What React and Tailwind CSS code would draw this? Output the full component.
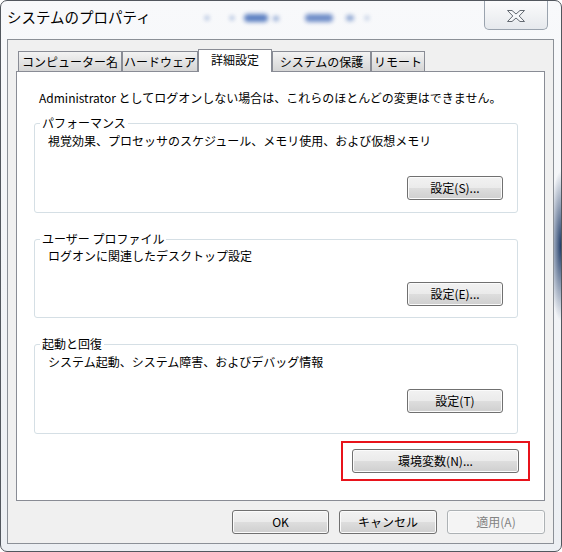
const tabs = [
  { label: "コンピューター名", width: "w-[104px]" },
  { label: "ハードウェア", width: "w-[76px]" },
  { label: "詳細設定", width: "w-[74px]", active: true },
  { label: "システムの保護", width: "w-[99px]" },
  { label: "リモート", width: "w-[54px]" },
];

function WinButton({ children, width, disabled = false }) {
  const look = disabled
    ? "border-[#adb2b5] bg-[#f4f4f4] text-[#838383]"
    : "border-[#707070] bg-[linear-gradient(to_bottom,#f2f2f2_0%,#ebebeb_48%,#dddddd_52%,#cfcfcf_100%)] text-black";
  return (
    <button
      type="button"
      className={`flex h-[24px] items-center justify-center rounded-[3px] border text-[12px] leading-none shadow-[inset_0_0_0_1px_#fbfbfb] ${look} ${width}`}
    >
      {children}
    </button>
  );
}

function GroupBox({ label, text, button, textPad, buttonGap, bottomPad }) {
  return (
    <div className={`relative ml-[17px] w-[484px] rounded-[3px] border border-[#d5dfe5] ${textPad} ${bottomPad}`}>
      {/* label sits on the top border line */}
      <span className="absolute -top-[9px] left-[5px] bg-white px-[2px] leading-[16px]">
        {label}
      </span>
      <p className="pl-[13px] leading-[16px]">{text}</p>
      <div className={`flex justify-end pr-[14px] ${buttonGap}`}>
        <WinButton width="w-[96px]">{button}</WinButton>
      </div>
    </div>
  );
}

function CloseIcon() {
  return (
    <svg width="20" height="14" viewBox="0 0 20 14">
      <polygon
        points="1.5,1.5 6,1.5 10,5 14,1.5 18.5,1.5 13.2,7 18.5,12.5 14,12.5 10,9 6,12.5 1.5,12.5 6.8,7"
        fill="#f6f7f9"
        stroke="#646a72"
        strokeWidth="1"
        strokeLinejoin="round"
      />
    </svg>
  );
}

function App() {
  return (
    <div className="h-[552px] w-[562px] bg-white font-['Noto_Sans_CJK_JP',sans-serif] text-[12px] text-black">
      <div className="flex h-full w-full flex-col rounded-[7px] border border-[#52575e] bg-[radial-gradient(12px_75px_at_100%_245px,#1f3b68,transparent),linear-gradient(to_bottom,#f8f9fb,#eceff3)]">

        {/* Title bar */}
        <div className="flex h-[38px] items-start">
          <div className="pl-[6px] pt-[6px] text-[14.5px] leading-[20px]">
            システムのプロパティ
          </div>
          <div className="ml-[54px] mt-[13px] flex items-center blur-[2px]">
            <span className="h-[4px] w-[4px] rounded-full bg-[#8aa3d0]" />
            <span className="ml-[21px] h-[4px] w-[4px] rounded-full bg-[#8aa3d0]" />
            <span className="ml-[10px] h-[8px] w-[24px] rounded-full bg-[#5d80c2]" />
            <span className="ml-[5px] h-[5px] w-[6px] rounded-full bg-[#90a8d4]" />
            <span className="ml-[26px] h-[8px] w-[28px] rounded-full bg-[#6f8dc8]" />
            <span className="ml-[13px] h-[6px] w-[8px] rounded-full bg-[#8ea6d2]" />
            <span className="ml-[11px] h-[4px] w-[4px] rounded-full bg-[#a3b7da]" />
          </div>
          <div className="ml-auto mr-[13px] flex h-[29px] w-[64px] items-center justify-center rounded-b-[5px] border-x border-b border-[#9aa3ae] bg-[linear-gradient(to_bottom,#fbfbfc,#e6e9ed)] pt-[2px]">
            <CloseIcon />
          </div>
        </div>

        {/* Client area */}
        <div className="ml-[6px] mr-[7px] flex h-[505px] flex-col border border-[#8b9097] bg-[#f0f0f0] px-[8px] pt-[9px]">

          {/* Tabs */}
          <div className="flex h-[22px] items-end pl-[2px]">
            {tabs.map((tab) =>
              tab.active ? (
                <div
                  key={tab.label}
                  className={`relative z-10 -mb-px flex h-[23px] items-center justify-center border-x border-t border-[#898c95] bg-white pb-[2px] ${tab.width}`}
                >
                  {tab.label}
                </div>
              ) : (
                <div
                  key={tab.label}
                  className={`flex h-[20px] items-center justify-center border-x border-t border-[#898c95] bg-[linear-gradient(to_bottom,#f3f3f3,#e4e4e4_50%,#d6d6d6)] ${tab.width}`}
                >
                  {tab.label}
                </div>
              )
            )}
          </div>

          {/* Tab page */}
          <div className="flex h-[430px] flex-col border border-[#898c95] bg-white">
            <p className="mt-[18px] pl-[22px] leading-[16px]">
              Administrator としてログオンしない場合は、これらのほとんどの変更はできません。
            </p>

            <div className="mt-[17px]">
              <GroupBox
                label="パフォーマンス"
                text="視覚効果、プロセッサのスケジュール、メモリ使用、および仮想メモリ"
                button="設定(S)..."
                textPad="pt-[9px]"
                buttonGap="mt-[27px]"
                bottomPad="pb-[12px]"
              />
            </div>

            <div className="mt-[26px]">
              <GroupBox
                label="ユーザー プロファイル"
                text="ログオンに関連したデスクトップ設定"
                button="設定(E)..."
                textPad="pt-[8px]"
                buttonGap="mt-[18px]"
                bottomPad="pb-[11px]"
              />
            </div>

            <div className="mt-[26px]">
              <GroupBox
                label="起動と回復"
                text="システム起動、システム障害、およびデバッグ情報"
                button="設定(T)"
                textPad="pt-[9px]"
                buttonGap="mt-[19px]"
                bottomPad="pb-[20px]"
              />
            </div>

            <div className="mr-[14px] mt-[7px] self-end border-2 border-[#e8131b] px-[9px] py-[6px]">
              <WinButton width="w-[167px]">環境変数(N)...</WinButton>
            </div>
          </div>

          {/* Dialog buttons */}
          <div className="mt-[9px] flex justify-end gap-[10px]">
            <WinButton width="w-[97px]">OK</WinButton>
            <WinButton width="w-[98px]">キャンセル</WinButton>
            <WinButton width="w-[98px]" disabled>
              適用(A)
            </WinButton>
          </div>
        </div>
      </div>
    </div>
  );
}

export default App;
